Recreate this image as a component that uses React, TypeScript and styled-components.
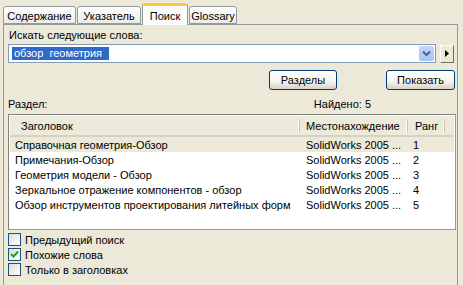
import React from 'react';
import styled, { createGlobalStyle } from 'styled-components';

const GlobalStyle = createGlobalStyle`
  html, body {
    margin: 0;
    padding: 0;
    background: #ece9d8;
    font-family: "Liberation Sans", Arial, sans-serif;
    font-size: 11px;
    color: #000;
  }
`;

const Window = styled.div`
  width: 463px;
  height: 285px;
  overflow: hidden;
  padding: 3px 0 0 3px;
  box-sizing: border-box;
`;

const TabStrip = styled.div`
  display: flex;
  align-items: flex-end;
  height: 21px;
`;

const Tab = styled.div<{ $active?: boolean; $w: number }>`
  width: ${(p) => p.$w}px;
  height: ${(p) => (p.$active ? '22px' : '18px')};
  margin-bottom: ${(p) => (p.$active ? '-1px' : '0')};
  display: flex;
  align-items: center;
  justify-content: center;
  box-sizing: border-box;
  border: 1px solid #919b9c;
  border-bottom: ${(p) => (p.$active ? 'none' : '1px solid #919b9c')};
  border-top: ${(p) => (p.$active ? '3px solid #ffc83c' : '1px solid #919b9c')};
  border-radius: 3px 3px 0 0;
  background: ${(p) => (p.$active ? '#fcfcfe' : 'linear-gradient(#ffffff, #ecebe5)')};
  margin-right: 1px;
  position: relative;
  z-index: ${(p) => (p.$active ? 1 : 0)};
  padding-top: ${(p) => (p.$active ? '0' : '1px')};
`;

const Panel = styled.div`
  width: 455px;
  height: 270px;
  box-sizing: border-box;
  border: 1px solid #919b9c;
  border-bottom: none;
  background: #ece9d8;
  padding: 4px 1px 0 4px;
`;

const Label = styled.div`
  line-height: 13px;
  padding-left: 1px;
`;

const ComboRow = styled.div`
  display: flex;
  align-items: center;
  gap: 4px;
  margin-top: 2px;
`;

const Combo = styled.div`
  width: 428px;
  height: 19px;
  box-sizing: border-box;
  border: 1px solid #7f9db9;
  background: #fff;
  display: flex;
  align-items: center;
  padding: 0 1px 0 3px;
`;

const Selected = styled.span`
  background: #316ac5;
  color: #fff;
  line-height: 13px;
  padding: 0 7px 0 2px;
  white-space: pre;
`;

const DropButton = styled.div`
  margin-left: auto;
  width: 15px;
  height: 15px;
  background: linear-gradient(#c4d6fc, #aac2f5);
  border-radius: 2px;
  display: flex;
  align-items: center;
  justify-content: center;
`;

const ArrowButton = styled.div`
  width: 14px;
  height: 18px;
  box-sizing: border-box;
  border: 1px solid #fff;
  border-right-color: #716f64;
  border-bottom-color: #716f64;
  background: #ece9d8;
  display: flex;
  align-items: center;
  justify-content: center;
`;

const ButtonRow = styled.div`
  display: flex;
  justify-content: flex-end;
  gap: 49px;
  margin-top: 7px;
  padding-right: 1px;
`;

const Button = styled.div<{ $w: number }>`
  width: ${(p) => p.$w}px;
  height: 20px;
  box-sizing: border-box;
  border: 1px solid #003c74;
  border-radius: 3px;
  background: linear-gradient(#ffffff, #f4f4f0 60%, #d6d0c5);
  display: flex;
  align-items: center;
  justify-content: center;
`;

const InfoRow = styled.div`
  display: flex;
  justify-content: space-between;
  margin-top: 7px;
  line-height: 14px;
  padding-right: 85px;
`;

const List = styled.div`
  margin-top: 3px;
  width: 448px;
  height: 116px;
  box-sizing: border-box;
  border: 1px solid #7f9db9;
  border-left-color: #808080;
  border-top-color: #808080;
  background: #fff;
  padding: 1px;
`;

const cols = '290px 108px 37px 1fr';

const Header = styled.div`
  display: grid;
  grid-template-columns: ${cols};
  height: 21px;
  background: #ebeadb;
  border-bottom: 2px solid #d6d2c2;
  box-sizing: border-box;
`;

const HeadCell = styled.div<{ $pad: number }>`
  display: flex;
  align-items: center;
  padding-left: ${(p) => p.$pad}px;
  border-right: 1px solid #c7c5b2;
  box-shadow: inset -1px 0 0 #fff;
  margin: 3px 0 2px;
  white-space: nowrap;
`;

const Row = styled.div<{ $sel?: boolean }>`
  display: grid;
  grid-template-columns: ${cols};
  height: 15px;
  align-items: center;
  background: ${(p) => (p.$sel ? '#ece9d8' : 'transparent')};
  white-space: nowrap;
`;

const Cell = styled.div<{ $pad: number }>`
  padding-left: ${(p) => p.$pad}px;
  overflow: hidden;
`;

const Checks = styled.div`
  display: flex;
  flex-direction: column;
  gap: 2px;
  margin-top: 3px;
`;

const CheckRow = styled.label`
  display: flex;
  align-items: center;
  gap: 4px;
  height: 13px;
`;

const Box = styled.span`
  width: 13px;
  height: 13px;
  box-sizing: border-box;
  border: 1px solid #1c5180;
  background: linear-gradient(135deg, #dcdcd7, #ffffff);
  display: flex;
  align-items: center;
  justify-content: center;
`;

const rows = [
  ['Справочная геометрия-Обзор', '1'],
  ['Примечания-Обзор', '2'],
  ['Геометрия модели - Обзор', '3'],
  ['Зеркальное отражение компонентов - обзор', '4'],
  ['Обзор инструментов проектирования литейных форм', '5'],
];

const Check = ({ on, children }: { on?: boolean; children: React.ReactNode }) => (
  <CheckRow>
    <Box>
      {on && (
        <svg width="9" height="9" viewBox="0 0 9 9">
          <path d="M1 4 L3.5 6.5 L8 1.5" stroke="#21a121" strokeWidth="2" fill="none" />
        </svg>
      )}
    </Box>
    {children}
  </CheckRow>
);

export default function App() {
  return (
    <Window>
      <GlobalStyle />
      <TabStrip>
        <Tab $w={73}>Содержание</Tab>
        <Tab $w={64}>Указатель</Tab>
        <Tab $w={46} $active>Поиск</Tab>
        <Tab $w={48}>Glossary</Tab>
      </TabStrip>
      <Panel>
        <Label>Искать следующие слова:</Label>
        <ComboRow>
          <Combo>
            <Selected>обзор  геометрия</Selected>
            <DropButton>
              <svg width="9" height="7" viewBox="0 0 9 7">
                <path d="M1 1.5 L4.5 5 L8 1.5" stroke="#4d6185" strokeWidth="2" fill="none" />
              </svg>
            </DropButton>
          </Combo>
          <ArrowButton>
            <svg width="4" height="7" viewBox="0 0 4 7">
              <path d="M0 0 L4 3.5 L0 7 Z" fill="#000" />
            </svg>
          </ArrowButton>
        </ComboRow>
        <ButtonRow>
          <Button $w={68}>Разделы</Button>
          <Button $w={69}>Показать</Button>
        </ButtonRow>
        <InfoRow>
          <span>Раздел:</span>
          <span>Найдено: 5</span>
        </InfoRow>
        <List>
          <Header>
            <HeadCell $pad={11}>Заголовок</HeadCell>
            <HeadCell $pad={6}>Местонахождение</HeadCell>
            <HeadCell $pad={7}>Ранг</HeadCell>
            <div />
          </Header>
          {rows.map(([t, r], i) => (
            <Row key={r} $sel={i === 0}>
              <Cell $pad={5}>{t}</Cell>
              <Cell $pad={6}>SolidWorks 2005 ...</Cell>
              <Cell $pad={5}>{r}</Cell>
              <div />
            </Row>
          ))}
        </List>
        <Checks>
          <Check>Предыдущий поиск</Check>
          <Check on>Похожие слова</Check>
          <Check>Только в заголовках</Check>
        </Checks>
      </Panel>
    </Window>
  );
}
